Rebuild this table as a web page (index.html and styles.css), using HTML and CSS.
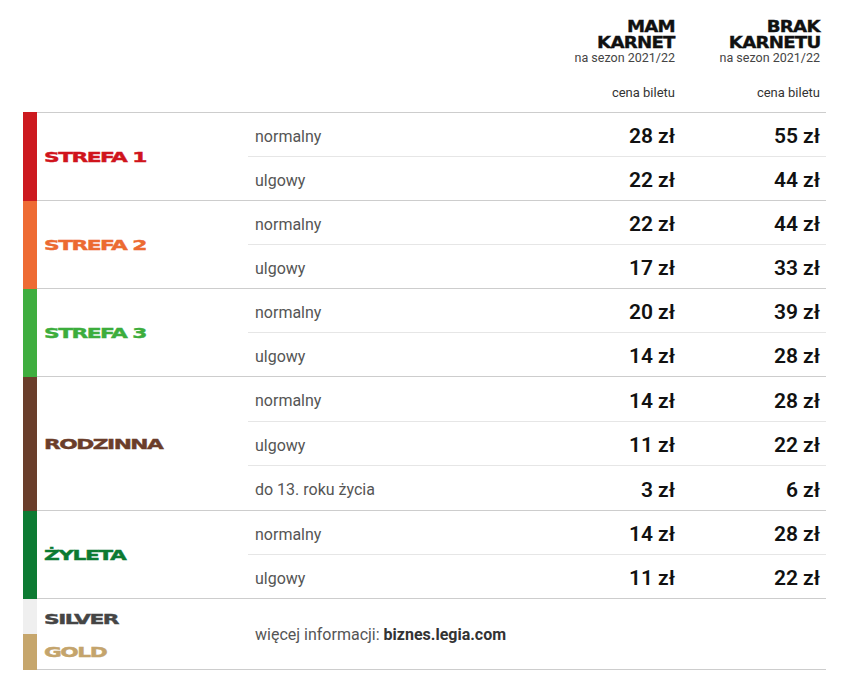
FILE: index.html
```html
<!DOCTYPE html>
<html lang="pl">
<head>
<meta charset="utf-8">
<title>Ceny biletów</title>
<link rel="stylesheet" href="styles.css">
</head>
<body>
<div class="page">
  <div class="header">
    <div class="hcell">
      <div class="htitle"><span class="wide">MAM</span><span class="wide">KARNET</span></div>
      <div class="season">na sezon 2021/22</div>
      <div class="cena">cena biletu</div>
    </div>
    <div class="hcell">
      <div class="htitle"><span class="wide">BRAK</span><span class="wide">KARNETU</span></div>
      <div class="season">na sezon 2021/22</div>
      <div class="cena">cena biletu</div>
    </div>
  </div>

  <div class="table">
    <div class="group first">
      <div class="bar c-red-bg"></div>
      <div class="gcontent">
        <div class="name c-red"><span class="zname">STREFA 1</span></div>
        <div class="rows">
          <div class="row"><span class="sub">normalny</span><span class="price">28 zł</span><span class="price">55 zł</span></div>
          <div class="row"><span class="sub">ulgowy</span><span class="price">22 zł</span><span class="price">44 zł</span></div>
        </div>
      </div>
    </div>

    <div class="group">
      <div class="bar c-orange-bg"></div>
      <div class="gcontent">
        <div class="name c-orange"><span class="zname">STREFA 2</span></div>
        <div class="rows">
          <div class="row"><span class="sub">normalny</span><span class="price">22 zł</span><span class="price">44 zł</span></div>
          <div class="row"><span class="sub">ulgowy</span><span class="price">17 zł</span><span class="price">33 zł</span></div>
        </div>
      </div>
    </div>

    <div class="group">
      <div class="bar c-green-bg"></div>
      <div class="gcontent">
        <div class="name c-green"><span class="zname">STREFA 3</span></div>
        <div class="rows">
          <div class="row"><span class="sub">normalny</span><span class="price">20 zł</span><span class="price">39 zł</span></div>
          <div class="row"><span class="sub">ulgowy</span><span class="price">14 zł</span><span class="price">28 zł</span></div>
        </div>
      </div>
    </div>

    <div class="group tall">
      <div class="bar c-brown-bg"></div>
      <div class="gcontent">
        <div class="name c-brown"><span class="zname">RODZINNA</span></div>
        <div class="rows">
          <div class="row"><span class="sub">normalny</span><span class="price">14 zł</span><span class="price">28 zł</span></div>
          <div class="row"><span class="sub">ulgowy</span><span class="price">11 zł</span><span class="price">22 zł</span></div>
          <div class="row"><span class="sub">do 13. roku życia</span><span class="price">3 zł</span><span class="price">6 zł</span></div>
        </div>
      </div>
    </div>

    <div class="group">
      <div class="bar c-dgreen-bg"></div>
      <div class="gcontent">
        <div class="name c-dgreen"><span class="zname">ŻYLETA</span></div>
        <div class="rows">
          <div class="row"><span class="sub">normalny</span><span class="price">14 zł</span><span class="price">28 zł</span></div>
          <div class="row"><span class="sub">ulgowy</span><span class="price">11 zł</span><span class="price">22 zł</span></div>
        </div>
      </div>
    </div>

    <div class="group vip">
      <div class="bar split"><div class="bar-silver"></div><div class="bar-gold"></div></div>
      <div class="gcontent">
        <div class="name stack">
          <div class="half c-silver"><span class="zname">SILVER</span></div>
          <div class="half c-gold"><span class="zname">GOLD</span></div>
        </div>
        <div class="rows info">
          <span class="sub">więcej informacji: <b>biznes.legia.com</b></span>
        </div>
      </div>
    </div>
  </div>
</div>
</body>
</html>
```

FILE: styles.css
```css
html, body {
  margin: 0;
  padding: 0;
  background: #ffffff;
}

body {
  font-family: Roboto, "Liberation Sans", sans-serif;
  color: #1a1a1a;
}

.page {
  width: 849px;
}

/* Header */
.header {
  box-sizing: border-box;
  height: 112px;
  display: grid;
  grid-template-columns: 145px 145px;
  justify-content: end;
  padding: 18px 29px 0 0;
}

.hcell {
  display: flex;
  flex-direction: column;
  align-items: flex-end;
  text-align: right;
}

.htitle {
  display: flex;
  flex-direction: column;
  align-items: flex-end;
  font-family: "DejaVu Sans", sans-serif;
  font-weight: 700;
  font-size: 14px;
  line-height: 16px;
  letter-spacing: -0.6px;
  color: #111;
  -webkit-text-stroke: 0.3px currentColor;
}

.wide {
  display: inline-block;
  transform: scale(1.3, 1.1);
  transform-origin: right center;
}

.season {
  font-size: 12.5px;
  line-height: 14px;
  color: #444;
  margin-top: 1px;
}

.cena {
  font-size: 13px;
  line-height: 16px;
  color: #333;
  margin-top: 20px;
}

/* Table */
.table {
  margin-left: 23px;
  width: 803px;
}

.group {
  display: flex;
}

.bar {
  width: 14px;
  flex: none;
}

.bar.split {
  display: flex;
  flex-direction: column;
}

.bar-silver {
  height: 35px;
  background: #efefef;
}

.bar-gold {
  flex: 1;
  background: #c6a66c;
}

.gcontent {
  flex: 1;
  display: flex;
  border-bottom: 1px solid #cdcdcd;
}

.group.first .gcontent {
  border-top: 1px solid #cdcdcd;
}

.name {
  width: 211px;
  flex: none;
  box-sizing: border-box;
  padding-left: 7px;
  display: flex;
  align-items: center;
}

.zname {
  display: inline-block;
  font-family: "DejaVu Sans", sans-serif;
  font-weight: 700;
  font-size: 14.5px;
  line-height: 18px;
  letter-spacing: -1px;
  transform: scaleX(1.5);
  transform-origin: left center;
  -webkit-text-stroke: 0.4px currentColor;
}

.name.stack {
  flex-direction: column;
  align-items: stretch;
}

.half {
  flex: 1;
  display: flex;
  align-items: center;
}

.half.c-silver {
  padding-top: 3px;
}

.rows {
  flex: 1;
}

.row {
  display: grid;
  grid-template-columns: 1fr 145px 145px;
  align-items: center;
  height: 43px;
  padding-right: 6px;
  box-sizing: border-box;
  padding-top: 3px;
}

.row + .row {
  border-top: 1px solid #e6e6e6;
  height: 44px;
}

.group.tall .row {
  height: 44px;
}

.group.tall .row:last-child {
  height: 45px;
}

.sub {
  padding-left: 7px;
  font-size: 16px;
  color: #555;
}

.sub b {
  font-weight: 700;
  color: #333;
}

.price {
  text-align: right;
  font-size: 21px;
  font-weight: 600;
  color: #111;
}

.rows.info {
  height: 70px;
  display: flex;
  align-items: center;
}

/* Colours */
.c-red { color: #d0141c; }
.c-red-bg { background: #cc1a1f; }
.c-orange { color: #ec6a31; }
.c-orange-bg { background: #ee6b34; }
.c-green { color: #3cad3c; }
.c-green-bg { background: #3fae3f; }
.c-brown { color: #6b3d2a; }
.c-brown-bg { background: #6a3e2b; }
.c-dgreen { color: #0c7a32; }
.c-dgreen-bg { background: #0d7b33; }
.c-silver { color: #454545; }
.c-gold { color: #c4a46c; }
```
